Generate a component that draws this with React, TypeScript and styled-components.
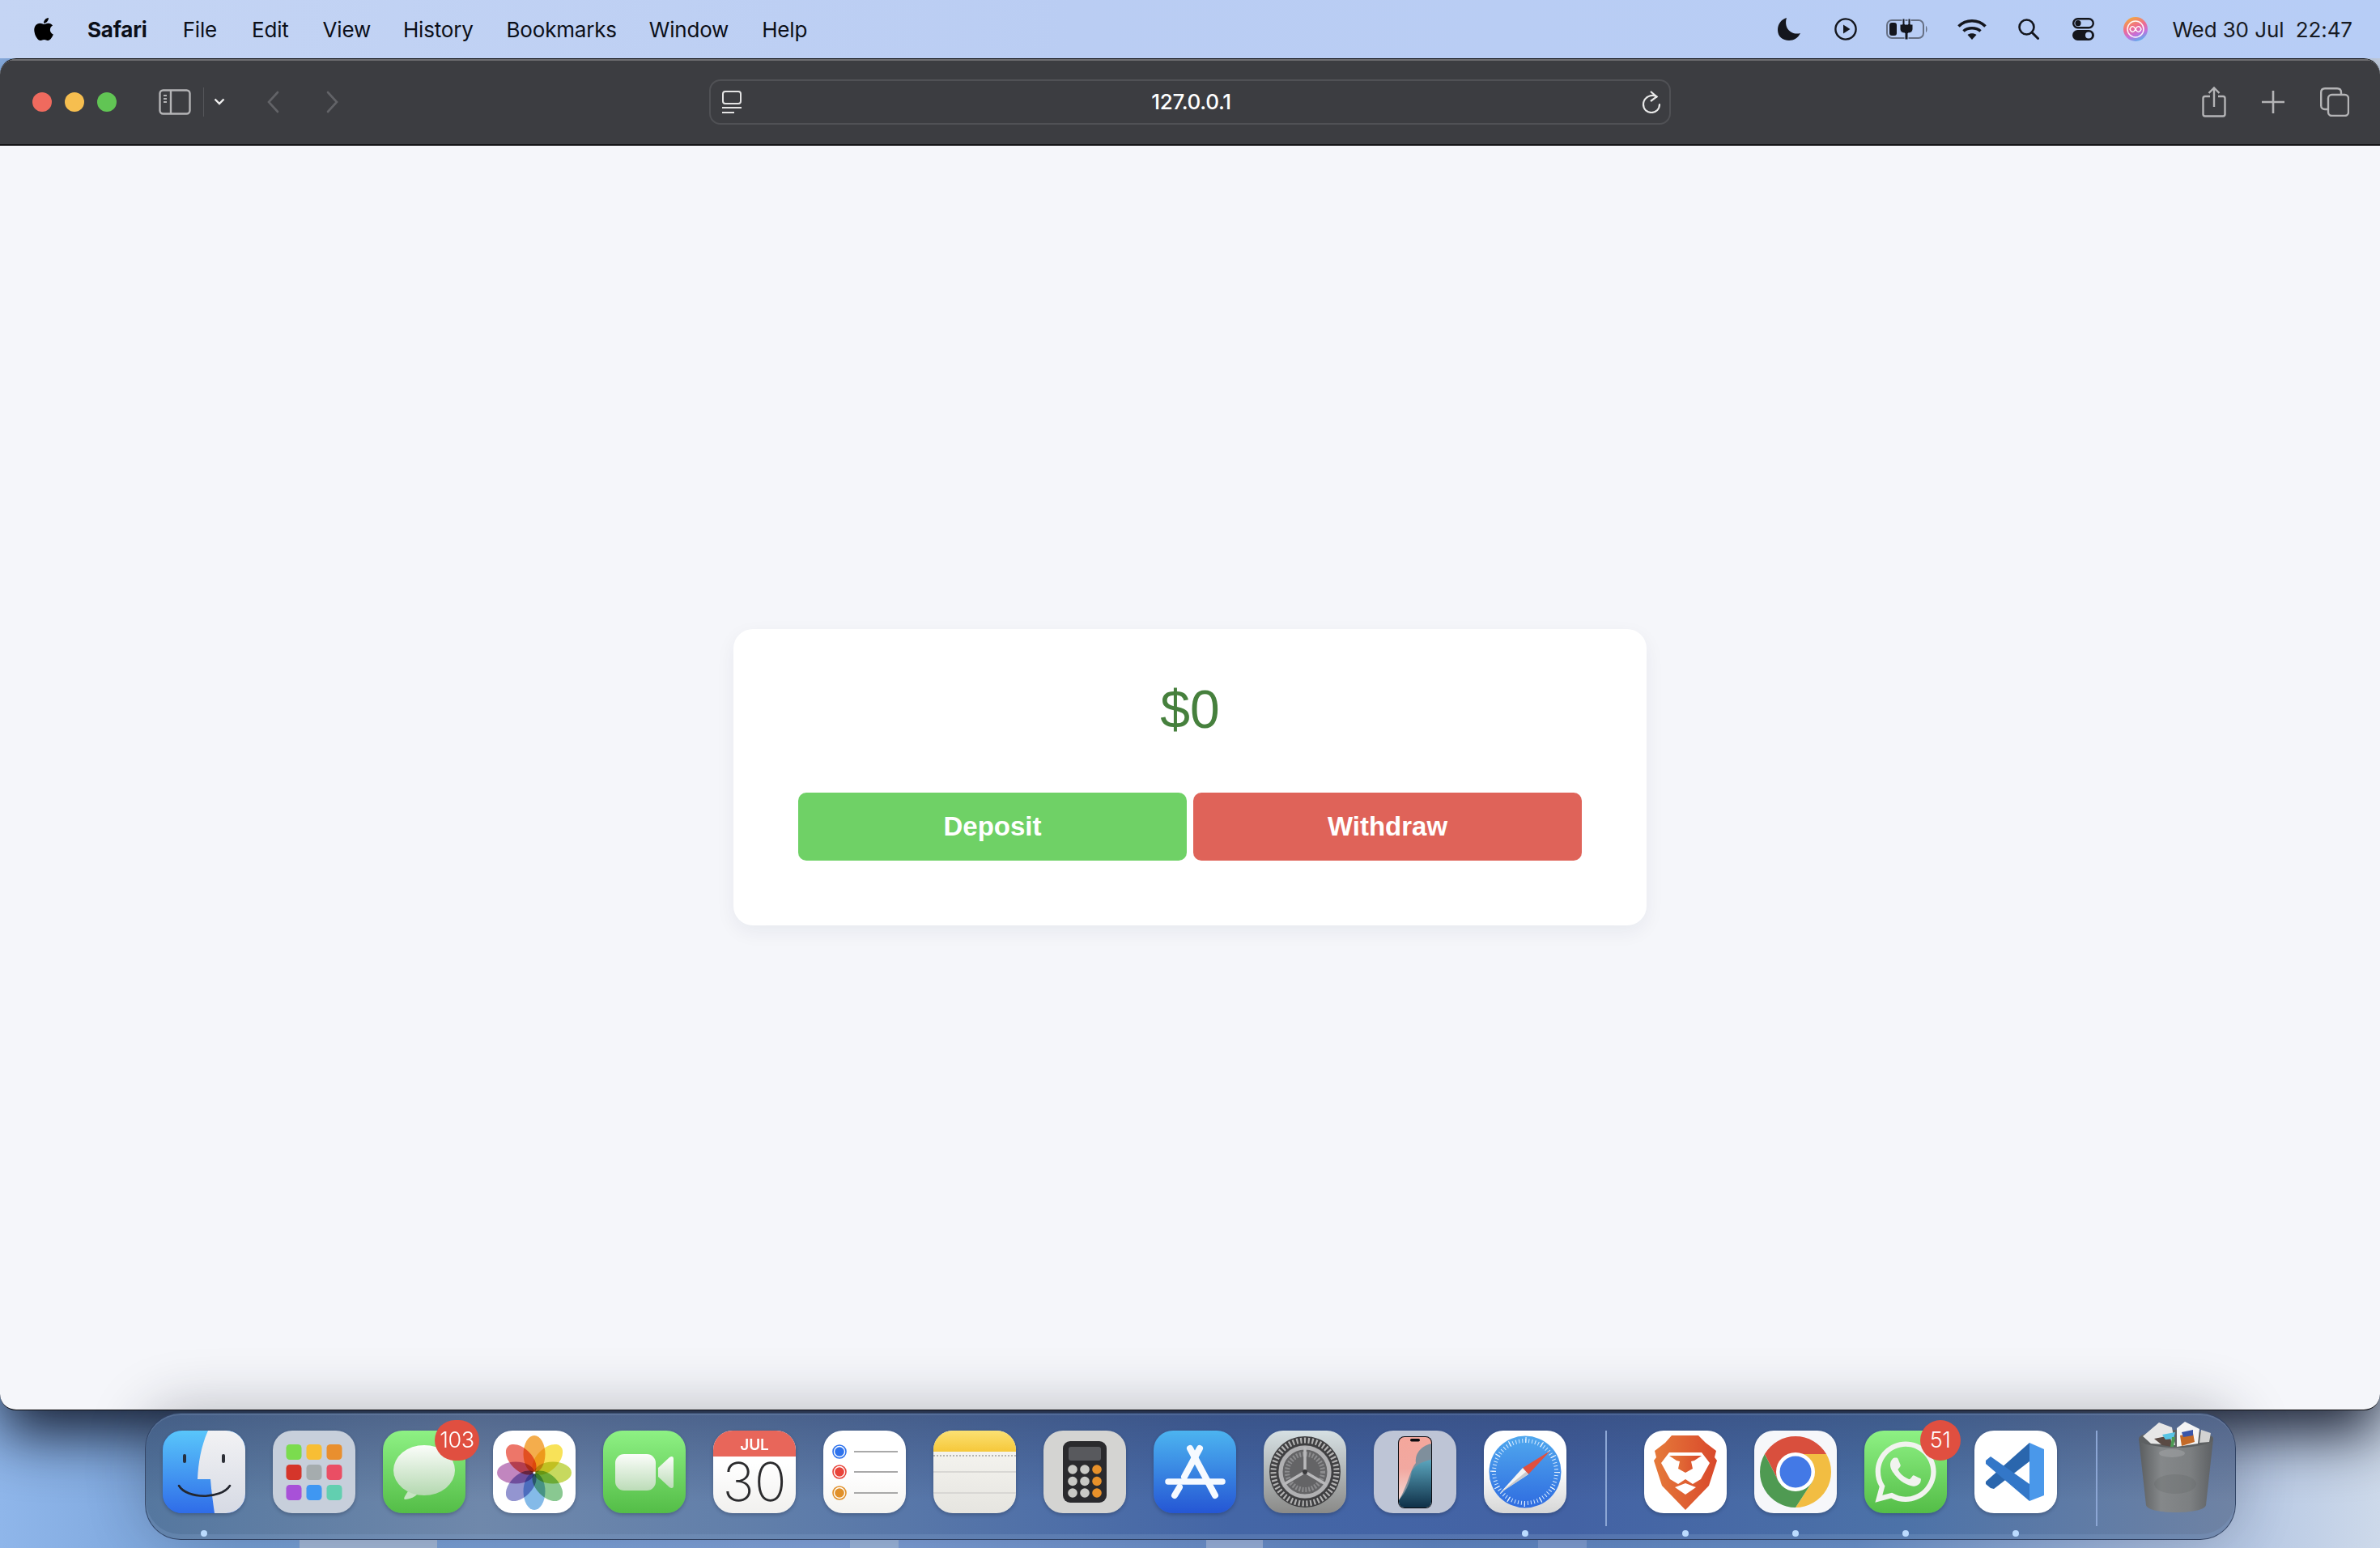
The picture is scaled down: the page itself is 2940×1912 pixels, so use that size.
import React from 'react';
import styled, { createGlobalStyle } from 'styled-components';
import { FaApple, FaWhatsapp } from 'react-icons/fa';

const GlobalStyle = createGlobalStyle`
	html, body {
		margin: 0;
		padding: 0;
		width: 2940px;
		height: 1912px;
		overflow: hidden;
		font-family: Inter, 'Liberation Sans', sans-serif;
	}
`;

const Desktop = styled.div`
	width: 2940px;
	height: 1912px;
	display: flex;
	flex-direction: column;
	background-color: #7ba0d6;
	background-image:
		linear-gradient(#a4b9d8, #a4b9d8),
		linear-gradient(#9cb6dc, #9cb6dc),
		linear-gradient(#98b0da, #98b0da),
		linear-gradient(#7f9dd2, #7f9dd2),
		linear-gradient(90deg, #8fb6ea 0%, #76a0d6 10%, #80a2da 35%, #5f86c4 60%, #6a92cc 78%, #a4bade 90%, #cdd9ea 100%);
	background-size: 170px 10px, 60px 10px, 70px 10px, 60px 10px, 100% 100%;
	background-position: 370px 1902px, 1050px 1902px, 1490px 1902px, 1900px 1902px, 0 0;
	background-repeat: no-repeat;
`;

const MenuBar = styled.header`
	position: relative;
	z-index: 2;
	height: 72px;
	flex: none;
	display: flex;
	align-items: center;
	justify-content: space-between;
	padding: 0 34px 0 38px;
	background: linear-gradient(90deg, #c5d5f4 0%, #bacdf3 45%, #b7cdf6 100%);
	color: #0c0f18;
	font-size: 26px;
`;

const MenuGroup = styled.nav`
	display: flex;
	align-items: center;
`;

const MenuItem = styled.span<{ $bold?: boolean; $left: number }>`
	margin-left: ${({ $left }) => $left}px;
	font-weight: ${({ $bold }) => ($bold ? 700 : 400)};
	letter-spacing: -0.2px;
`;

const StatusSlot = styled.span<{ $left: number }>`
	display: flex;
	align-items: center;
	margin-left: ${({ $left }) => $left}px;
`;

const Clock = styled.time`
	margin-left: 30px;
	white-space: pre;
	letter-spacing: -0.1px;
	color: #171a22;
`;

const BrowserWindow = styled.main`
	width: 2940px;
	height: 1670px;
	flex: none;
	box-sizing: border-box;
	display: flex;
	flex-direction: column;
	border-style: solid;
	border-color: #0b0b0d;
	border-width: 1px 0;
	border-radius: 20px;
	overflow: hidden;
	background: #f5f6fa;
	box-shadow: 0 30px 70px rgba(12, 18, 34, 0.9);
`;

const Toolbar = styled.div`
	height: 107px;
	flex: none;
	box-sizing: border-box;
	display: grid;
	grid-template-columns: 1fr 1188px 1fr;
	align-items: center;
	background: #3c3d41;
	border-bottom: 2px solid #141416;
	box-shadow: inset 0 2px 0 #6d6d70;
`;

const ToolbarLeft = styled.div`
	display: flex;
	align-items: center;
	padding-left: 40px;
`;

const ToolbarRight = styled.div`
	display: flex;
	align-items: center;
	justify-content: flex-end;
	gap: 44px;
	padding-right: 38px;
`;

const TrafficLight = styled.span<{ $color: string }>`
	width: 24px;
	height: 24px;
	border-radius: 50%;
	margin-right: 16px;
	background: ${({ $color }) => $color};
`;

const ToolbarDivider = styled.span`
	width: 1px;
	height: 36px;
	margin: 0 12px 0 15px;
	background: #55565a;
`;

const NavIcon = styled.span<{ $left: number }>`
	display: flex;
	margin-left: ${({ $left }) => $left}px;
`;

const AddressBar = styled.div`
	height: 56px;
	box-sizing: border-box;
	display: flex;
	align-items: center;
	justify-content: space-between;
	padding: 0 9px 0 14px;
	border: 2px solid #505155;
	border-radius: 14px;
	color: #fff;
	font-size: 26px;
	font-weight: 500;
`;

const AddressText = styled.span`
	letter-spacing: -0.3px;
`;

const PageBody = styled.section`
	flex: 1;
	display: flex;
	align-items: center;
	justify-content: center;
	font-family: 'Liberation Sans', Arial, sans-serif;
`;

const Card = styled.div`
	width: 1128px;
	height: 366px;
	box-sizing: border-box;
	margin-bottom: 1px;
	padding: 59px 80px 80px;
	display: flex;
	flex-direction: column;
	background: #fff;
	border-radius: 24px;
	box-shadow: 0 8px 24px rgba(20, 30, 60, 0.06);
`;

const Balance = styled.h2`
	margin: 0 0 63px;
	height: 80px;
	line-height: 80px;
	text-align: center;
	font-size: 66px;
	font-weight: 400;
	color: #46803d;
`;

const ButtonRow = styled.div`
	display: flex;
	gap: 8px;
`;

const ActionButton = styled.button<{ $color: string }>`
	flex: 1;
	height: 84px;
	border: 0;
	border-radius: 10px;
	background: ${({ $color }) => $color};
	color: #fff;
	font-family: inherit;
	font-size: 33px;
	font-weight: 700;
`;

const DockRow = styled.div`
	position: relative;
	z-index: 1;
	display: flex;
	justify-content: center;
	margin-top: 3px;
`;

const Dock = styled.footer`
	width: 2583px;
	height: 157px;
	box-sizing: border-box;
	display: flex;
	gap: 34px;
	padding: 21px 21px 0 21px;
	border: 1px solid rgba(40, 55, 85, 0.75);
	border-radius: 44px;
	background:
		linear-gradient(180deg, rgba(44, 60, 100, 0.42) 0%, rgba(44, 60, 100, 0) 70%),
		linear-gradient(90deg, #55779f 0%, #6f88ab 16%, #607eaa 30%, #4466a6 52%, #4362a4 68%, #4c72a8 84%, #6f83a4 100%);
	box-shadow: 0 -6px 70px rgba(30, 32, 45, 0.28), inset 0 -6px 0 rgba(130, 160, 205, 0.28), inset 0 2px 0 rgba(150, 170, 200, 0.2);
`;

const DockItem = styled.div`
	position: relative;
	width: 102px;
	flex: none;
	display: flex;
	flex-direction: column;
	align-items: center;
`;

const AppTile = styled.div<{ $bg: string }>`
	width: 102px;
	height: 102px;
	border-radius: 24px;
	background: ${({ $bg }) => $bg};
	display: flex;
	align-items: center;
	justify-content: center;
	overflow: hidden;
	box-shadow: 0 2px 4px rgba(15, 25, 50, 0.3);
	svg {
		display: block;
	}
`;

const RunningDot = styled.span<{ $on: boolean }>`
	width: 8px;
	height: 8px;
	margin-top: 21px;
	border-radius: 50%;
	background: ${({ $on }) => ($on ? '#bcdcff' : 'transparent')};
`;

const Badge = styled.span`
	position: absolute;
	top: -13px;
	right: -17px;
	min-width: 50px;
	height: 50px;
	box-sizing: border-box;
	padding: 0 6px;
	border-radius: 25px;
	background: #e04f40;
	color: #fff;
	font-size: 27px;
	font-weight: 300;
	line-height: 50px;
	text-align: center;
	letter-spacing: -0.5px;
`;

const DockDivider = styled.span`
	width: 2px;
	height: 118px;
	margin: 0 12px 0 14px;
	flex: none;
	background: #8ca6d4;
`;

const Petal = styled.ellipse`
	mix-blend-mode: multiply;
`;

const Tile: React.FC<{ children: React.ReactNode }> = ({ children }) => (
	<svg width="102" height="102" viewBox="0 0 102 102">
		{children}
	</svg>
);

const Finder = () => (
	<Tile>
		<defs>
			<linearGradient id="fl" x1="0" y1="0" x2="0" y2="1">
				<stop offset="0" stopColor="#59c6fb" />
				<stop offset="1" stopColor="#2f6ce8" />
			</linearGradient>
			<linearGradient id="fr" x1="0" y1="0" x2="0" y2="1">
				<stop offset="0" stopColor="#f2f2f4" />
				<stop offset="1" stopColor="#d6dae4" />
			</linearGradient>
		</defs>
		<rect width="102" height="102" fill="url(#fl)" />
		<path d="M56 0H102V102H64C62 88 60 74 59 60H43C44 38 48 18 56 0Z" fill="url(#fr)" />
		<rect x="25" y="29" width="4" height="11" rx="2" fill="#26303f" />
		<rect x="73" y="29" width="4" height="11" rx="2" fill="#2c2f36" />
		<path d="M20 68C30 85 72 85 83 68" fill="none" stroke="#23262e" strokeWidth="2.6" strokeLinecap="round" />
	</Tile>
);

const launchColors = ['#7bdc4e', '#f8be34', '#e98f2e', '#d5352a', '#a5acae', '#ea4e64', '#a851d8', '#3f97f2', '#62cfb0'];

const Launchpad = () => (
	<Tile>
		{launchColors.map((color, i) => (
			<rect
				key={color}
				x={16.5 + (i % 3) * 25}
				y={17 + Math.floor(i / 3) * 25}
				width="19"
				height="19"
				rx="4.5"
				fill={color}
			/>
		))}
	</Tile>
);

const Messages = () => (
	<Tile>
		<defs>
			<linearGradient id="mb" x1="0" y1="0" x2="0" y2="1">
				<stop offset="0" stopColor="#fbfdfa" />
				<stop offset="1" stopColor="#b4d8b0" />
			</linearGradient>
		</defs>
		<path d="M31 75C27 81 25 84 27 85C33 85 40 82 44 77Z" fill="#c7e4c3" />
		<ellipse cx="51" cy="49" rx="38" ry="31" fill="url(#mb)" />
	</Tile>
);

const petals = ['#f3a63c', '#f8e04a', '#c2d650', '#7fc488', '#7ab4e6', '#8a8ccc', '#bc7cba', '#ec6a5c'];

const Photos = () => (
	<Tile>
		{petals.map((color, i) => (
			<Petal
				key={color}
				cx="51"
				cy="29"
				rx="13.5"
				ry="23"
				fill={color}
				opacity="0.92"
				transform={`rotate(${i * 45} 51 52)`}
			/>
		))}
		<circle cx="51" cy="52" r="1.6" fill="#fff" />
	</Tile>
);

const FaceTime = () => (
	<Tile>
		<defs>
			<linearGradient id="ft" x1="0" y1="0" x2="0" y2="1">
				<stop offset="0" stopColor="#fbfdfa" />
				<stop offset="1" stopColor="#bcdcb8" />
			</linearGradient>
		</defs>
		<rect x="15" y="29" width="50" height="45" rx="11" fill="url(#ft)" />
		<path d="M68 46L82 33C85 31 87 32 87 35V68C87 71 85 72 82 70L68 57Z" fill="url(#ft)" />
	</Tile>
);

const Calendar = () => (
	<Tile>
		<rect width="102" height="32" fill="#e8665a" />
		<text x="51" y="24" textAnchor="middle" fontSize="19" fontWeight="600" fill="#fff" fontFamily="Inter, sans-serif">
			JUL
		</text>
		<text x="51" y="87" textAnchor="middle" fontSize="66" fontWeight="200" fill="#2b2b2d" fontFamily="Inter, sans-serif">
			30
		</text>
	</Tile>
);

const reminderRows = [
	{ y: 26, color: '#2f73ec' },
	{ y: 51, color: '#e8443a' },
	{ y: 77, color: '#e0902a' },
];

const Reminders = () => (
	<Tile>
		{reminderRows.map(({ y, color }) => (
			<g key={y}>
				<circle cx="20" cy={y} r="8" fill="#fff" stroke={color} strokeWidth="1.6" />
				<circle cx="20" cy={y} r="5.8" fill={color} />
				<rect x="38" y={y - 1} width="54" height="2" fill="#a9a9a9" />
			</g>
		))}
	</Tile>
);

const Notes = () => (
	<Tile>
		<defs>
			<linearGradient id="ny" x1="0" y1="0" x2="0" y2="1">
				<stop offset="0" stopColor="#fbe173" />
				<stop offset="1" stopColor="#f6c83a" />
			</linearGradient>
		</defs>
		<rect width="102" height="26" fill="url(#ny)" />
		<line x1="0" y1="31" x2="102" y2="31" stroke="#b5b5b2" strokeWidth="2" strokeDasharray="2 2" />
		<rect y="50" width="102" height="2" fill="#d8d7d4" />
		<rect y="76" width="102" height="2" fill="#d8d7d4" />
	</Tile>
);

const calcKeys = [0, 1, 2].flatMap((row) => [0, 1, 2].map((col) => ({ row, col })));

const Calculator = () => (
	<Tile>
		<rect x="24" y="13" width="54" height="76" rx="9" fill="#2a2a2d" />
		<rect x="31" y="20" width="40" height="17" rx="3" fill="#58595d" />
		{calcKeys.map(({ row, col }) => (
			<circle
				key={`${row}-${col}`}
				cx={36 + col * 15}
				cy={48 + row * 14.5}
				r="5.8"
				fill={col === 2 ? '#e8912a' : '#c9c9c5'}
			/>
		))}
	</Tile>
);

const AppStore = () => (
	<Tile>
		<g fill="none" stroke="#f6faff" strokeLinecap="round">
			<path d="M57 22L38 57" strokeWidth="8" />
			<path d="M32 70L26 80" strokeWidth="8" />
			<path d="M45 22L76 80" strokeWidth="8" />
			<path d="M18 63H85" strokeWidth="7.5" />
		</g>
	</Tile>
);

const Settings = () => (
	<Tile>
		<circle cx="51" cy="51" r="44" fill="#3f3f41" />
		<circle cx="51" cy="51" r="39" fill="none" stroke="#b2b2b2" strokeWidth="7" strokeDasharray="2.2 2.6" />
		<circle cx="51" cy="51" r="33" fill="#646466" />
		<circle cx="51" cy="51" r="30" fill="none" stroke="#b0b0b2" strokeWidth="5" />
		<circle cx="51" cy="51" r="22" fill="none" stroke="#8c8c8e" strokeWidth="6" strokeDasharray="2 2" />
		<g stroke="#b8b8ba" strokeWidth="3.5">
			<line x1="51" y1="51" x2="51" y2="20" />
			<line x1="51" y1="51" x2="24" y2="67" />
			<line x1="51" y1="51" x2="78" y2="67" />
		</g>
		<circle cx="51" cy="51" r="3" fill="#3b3b3d" />
	</Tile>
);

const IPhone = () => (
	<Tile>
		<defs>
			<linearGradient id="ip" x1="0" y1="0" x2="0" y2="1">
				<stop offset="0" stopColor="#f4a79c" />
				<stop offset="0.45" stopColor="#f2a8a0" />
				<stop offset="1" stopColor="#f6e6e2" />
			</linearGradient>
			<linearGradient id="iq" x1="0" y1="0" x2="0" y2="1">
				<stop offset="0" stopColor="#5ba5bd" />
				<stop offset="1" stopColor="#0f3048" />
			</linearGradient>
			<clipPath id="ic">
				<rect x="31" y="8" width="40" height="87" rx="7" />
			</clipPath>
		</defs>
		<rect x="30" y="7" width="42" height="89" rx="8" fill="#0b0b10" />
		<g clipPath="url(#ic)">
			<rect x="31" y="8" width="40" height="87" fill="url(#ip)" />
			<path d="M71 16C56 20 51 30 52 40C45 48 42 68 31 86V95H71Z" fill="#7f8f9c" />
			<path d="M71 36C60 38 52 42 47 50C45 66 38 78 31 86V95H71Z" fill="url(#iq)" />
		</g>
		<rect x="45" y="10" width="12" height="3.5" rx="1.7" fill="#0b0b10" />
	</Tile>
);

const Safari = () => (
	<Tile>
		<defs>
			<linearGradient id="sg" x1="0" y1="0" x2="0" y2="1">
				<stop offset="0" stopColor="#50a8ee" />
				<stop offset="1" stopColor="#2f6ce0" />
			</linearGradient>
		</defs>
		<circle cx="51" cy="51" r="44.5" fill="url(#sg)" />
		<circle cx="51" cy="51" r="38.5" fill="none" stroke="#d8ebff" strokeWidth="5" strokeDasharray="1 3.03" />
		<circle cx="51" cy="51" r="39.5" fill="none" stroke="#eef6ff" strokeWidth="7" strokeDasharray="1.1 19.6" />
		<polygon points="82,25 48,46 55,54" fill="#e0503f" />
		<polygon points="20,77 48,46 55,54" fill="#f4f4f4" />
		<polygon points="20,77 55,54 52,51" fill="#c9c9cc" />
	</Tile>
);

const Brave = () => (
	<Tile>
		<defs>
			<linearGradient id="bg" x1="0" y1="0" x2="1" y2="0">
				<stop offset="0" stopColor="#e57a3a" />
				<stop offset="1" stopColor="#d9482b" />
			</linearGradient>
		</defs>
		<polygon
			points="34,6 67,6 76,15 89,25 87,33 90,37 80,68 51,98 22,68 12,37 15,33 13,25 26,15"
			fill="url(#bg)"
		/>
		<polygon points="21,40 31,27 71,27 81,40 70,60 60,66 51,60 42,66 32,60" fill="#fff" />
		<polygon points="31,31 71,31 62,37 58,38 60,47 51,52 42,47 44,38 40,37" fill="url(#bg)" />
		<polygon points="38,70 51,65 64,70 51,79" fill="#fff" />
	</Tile>
);

const Chrome = () => (
	<Tile>
		<path d="M12.9 29A44 44 0 0 1 89.1 29L51 29L51 51L30.2 63Z" fill="#d94f3d" />
		<path d="M89.1 29A44 44 0 0 1 51 95L71.8 63L51 51L51 29Z" fill="#f2bd42" />
		<path d="M51 95A44 44 0 0 1 12.9 29L30.2 63L51 51L71.8 63Z" fill="#4f9a52" />
		<circle cx="51" cy="51" r="24" fill="#fff" />
		<circle cx="51" cy="51" r="19.5" fill="#4379e6" />
	</Tile>
);

const VSCode = () => (
	<Tile>
		<polygon points="68,15 68,38 24,72 20,71 14,66 14,63" fill="#2a66ad" />
		<polygon points="20,32 14,37 14,41 68,87 68,66" fill="#3377c8" />
		<polygon points="68,15 86,23 86,80 68,87" fill="#4a98ea" />
	</Tile>
);

const TrashSvg = styled.svg`
	display: block;
	overflow: visible;
`;

const Trash = () => (
	<TrashSvg width="102" height="102" viewBox="0 0 102 102">
		<defs>
			<linearGradient id="tc" x1="0" y1="0" x2="1" y2="0">
				<stop offset="0" stopColor="#5a5d5f" />
				<stop offset="0.3" stopColor="#85888a" />
				<stop offset="0.7" stopColor="#7c7f81" />
				<stop offset="1" stopColor="#5d6063" />
			</linearGradient>
		</defs>
		<path d="M5 10L14 92C16 104 86 104 88 92L97 10Z" fill="url(#tc)" />
		<ellipse cx="51" cy="10" rx="46" ry="11" fill="#5d6062" />
		<g>
			<polygon points="10,7 30,-10 46,-4 50,18 20,16" fill="#e6e6e6" />
			<polygon points="52,-3 62,-11 80,-2 78,16 52,20" fill="#f4f4f4" />
			<polygon points="82,-1 94,3 92,14 80,15" fill="#d2d2d2" />
			<polygon points="24,10 44,6 46,20 34,18" fill="#5a4a44" />
			<polygon points="34,5 50,2 48,10 38,11" fill="#58c4e4" />
			<polygon points="56,6 72,3 74,14 58,19" fill="#c46a28" />
			<polygon points="58,2 72,-1 72,6 60,8" fill="#3a55a8" />
			<polygon points="46,8 50,8 48,20 44,20" fill="#4c9a54" />
		</g>
		<ellipse cx="46" cy="28" rx="16" ry="5" fill="#a4a6a8" opacity="0.5" />
		<ellipse cx="50" cy="66" rx="26" ry="12" fill="#5f6265" opacity="0.25" />
	</TrashSvg>
);

const WhatsApp = () => <FaWhatsapp size={86} color="#f1f3ef" />;

type DockApp = {
	id: string;
	bg: string;
	icon: React.ReactNode;
	running?: boolean;
	badge?: string;
};

const green = 'linear-gradient(180deg, #8ef184 0%, #54bd47 100%)';

const firstApps: DockApp[] = [
	{ id: 'finder', bg: '#2f6ce8', icon: <Finder />, running: true },
	{ id: 'launchpad', bg: '#c7cfdb', icon: <Launchpad /> },
	{ id: 'messages', bg: green, icon: <Messages />, badge: '103' },
	{ id: 'photos', bg: '#fff', icon: <Photos /> },
	{ id: 'facetime', bg: green, icon: <FaceTime /> },
	{ id: 'calendar', bg: 'linear-gradient(180deg, #fff 40%, #f1f0ee 100%)', icon: <Calendar /> },
	{ id: 'reminders', bg: 'linear-gradient(180deg, #fff 50%, #f4f3f0 100%)', icon: <Reminders /> },
	{ id: 'notes', bg: 'linear-gradient(180deg, #f8f7f3 0%, #e6e5e0 100%)', icon: <Notes /> },
	{ id: 'calculator', bg: '#d4d4d2', icon: <Calculator /> },
	{ id: 'appstore', bg: 'linear-gradient(180deg, #4cb4f0 0%, #2556d4 100%)', icon: <AppStore /> },
	{ id: 'settings', bg: 'linear-gradient(180deg, #d6e0e3 0%, #8a8a88 100%)', icon: <Settings /> },
	{ id: 'iphone', bg: '#bec5d6', icon: <IPhone /> },
	{ id: 'safari', bg: 'linear-gradient(180deg, #fff 45%, #d6d6d6 100%)', icon: <Safari />, running: true },
];

const secondApps: DockApp[] = [
	{ id: 'brave', bg: '#fff', icon: <Brave />, running: true },
	{ id: 'chrome', bg: '#f6f7fa', icon: <Chrome />, running: true },
	{ id: 'whatsapp', bg: green, icon: <WhatsApp />, running: true, badge: '51' },
	{ id: 'vscode', bg: '#fff', icon: <VSCode />, running: true },
];

const renderApp = (app: DockApp) => (
	<DockItem key={app.id}>
		<AppTile $bg={app.bg}>{app.icon}</AppTile>
		<RunningDot $on={!!app.running} />
		{app.badge && <Badge>{app.badge}</Badge>}
	</DockItem>
);

const menuItems = [
	{ label: 'File', left: 44 },
	{ label: 'Edit', left: 43 },
	{ label: 'View', left: 42 },
	{ label: 'History', left: 40 },
	{ label: 'Bookmarks', left: 41 },
	{ label: 'Window', left: 40 },
	{ label: 'Help', left: 41 },
];

const ink = '#14161d';

const App = () => {
	return (
		<Desktop>
			<GlobalStyle />
			<MenuBar>
				<MenuGroup>
					<FaApple size={32} color="#000" />
					<MenuItem $bold $left={38}>
						Safari
					</MenuItem>
					{menuItems.map((item) => (
						<MenuItem key={item.label} $left={item.left}>
							{item.label}
						</MenuItem>
					))}
				</MenuGroup>
				<MenuGroup>
					<StatusSlot $left={0}>
						<svg width="28" height="28" viewBox="0 0 28 28">
							<path d="M11 0C4 2 0 8 0 15C0 23 6 28 14 28C20 28 25 25 28 19C17 22 7 13 11 0Z" fill={ink} />
						</svg>
					</StatusSlot>
					<StatusSlot $left={42}>
						<svg width="28" height="28" viewBox="0 0 28 28">
							<circle cx="14" cy="14" r="12.6" fill="none" stroke={ink} strokeWidth="2.4" />
							<path d="M11 8.5L19.5 14L11 19.5Z" fill={ink} />
						</svg>
					</StatusSlot>
					<StatusSlot $left={36}>
						<svg width="52" height="26" viewBox="0 0 52 26">
							<rect x="1" y="2" width="45" height="22" rx="6" fill="none" stroke="#667085" strokeWidth="2" />
							<path d="M49 9C51 10 51 16 49 17Z" fill="#667085" />
							<rect x="4" y="5" width="9" height="16" rx="3" fill={ink} />
							<path d="M20 0H23V7H27V0H30V7H33V13C33 16 30 18 27 18V26H23V18C20 18 17 16 17 13V7H20Z" fill={ink} stroke="#b7cdf6" strokeWidth="1" />
						</svg>
					</StatusSlot>
					<StatusSlot $left={36}>
						<svg width="36" height="26" viewBox="0 0 36 26">
							<g fill="none" stroke={ink} strokeWidth="3.6">
								<path d="M1.5 9.5C10.5 0.5 25.5 0.5 34.5 9.5" />
								<path d="M7.5 15.5C13 10.5 23 10.5 28.5 15.5" />
							</g>
							<path d="M12.5 20C15.5 17.5 20.5 17.5 23.5 20L18 26Z" fill={ink} />
						</svg>
					</StatusSlot>
					<StatusSlot $left={39}>
						<svg width="26" height="26" viewBox="0 0 26 26">
							<circle cx="10.5" cy="10.5" r="9" fill="none" stroke={ink} strokeWidth="2.6" />
							<path d="M17 17L24.5 24.5" stroke={ink} strokeWidth="3" strokeLinecap="round" />
						</svg>
					</StatusSlot>
					<StatusSlot $left={41}>
						<svg width="27" height="28" viewBox="0 0 27 28">
							<rect x="1.2" y="1.2" width="24.6" height="11" rx="5.5" fill="none" stroke={ink} strokeWidth="2.4" />
							<circle cx="7" cy="6.7" r="3.6" fill={ink} />
							<rect y="15" width="27" height="13" rx="6.5" fill={ink} />
							<circle cx="20" cy="21.5" r="4" fill="#b7cdf6" />
						</svg>
					</StatusSlot>
					<StatusSlot $left={36}>
						<svg width="30" height="30" viewBox="0 0 30 30">
							<defs>
								<linearGradient id="siri" x1="0.3" y1="0" x2="0.7" y2="1">
									<stop offset="0" stopColor="#f4a93c" />
									<stop offset="0.4" stopColor="#ef6c8e" />
									<stop offset="0.7" stopColor="#c46fdc" />
									<stop offset="1" stopColor="#4fb6ee" />
								</linearGradient>
							</defs>
							<circle cx="15" cy="15" r="15" fill="url(#siri)" />
							<circle cx="15" cy="15" r="10" fill="none" stroke="#fff" strokeWidth="1.5" opacity="0.95" />
							<path d="M8 15C10 10 13 11 15 15C17 19 20 20 22 15C20 10 17 11 15 15C13 19 10 20 8 15Z" fill="none" stroke="#fff" strokeWidth="1.4" />
						</svg>
					</StatusSlot>
					<Clock>Wed 30 Jul  22:47</Clock>
				</MenuGroup>
			</MenuBar>

			<BrowserWindow>
				<Toolbar>
					<ToolbarLeft>
						<TrafficLight $color="#ef6a5e" />
						<TrafficLight $color="#f6be4f" />
						<TrafficLight $color="#61c554" />
						<NavIcon $left={36}>
							<svg width="40" height="32" viewBox="0 0 40 32" fill="none">
								<rect x="1.5" y="1.5" width="37" height="29" rx="4" stroke="#b4b4b6" strokeWidth="2.4" />
								<line x1="15" y1="2" x2="15" y2="30" stroke="#b4b4b6" strokeWidth="2.4" />
								<path d="M6 8H10M6 12H10M6 16H10" stroke="#b4b4b6" strokeWidth="2" />
							</svg>
						</NavIcon>
						<ToolbarDivider />
						<svg width="14" height="9" viewBox="0 0 14 9" fill="none">
							<path d="M1.5 1.5L7 7L12.5 1.5" stroke="#f0f0f0" strokeWidth="2.4" />
						</svg>
						<NavIcon $left={51}>
							<svg width="16" height="28" viewBox="0 0 16 28" fill="none">
								<path d="M14 2L3 14L14 26" stroke="#626367" strokeWidth="2.6" strokeLinecap="round" />
							</svg>
						</NavIcon>
						<NavIcon $left={58}>
							<svg width="16" height="28" viewBox="0 0 16 28" fill="none">
								<path d="M2 2L13 14L2 26" stroke="#626367" strokeWidth="2.6" strokeLinecap="round" />
							</svg>
						</NavIcon>
					</ToolbarLeft>
					<AddressBar>
						<svg width="24" height="28" viewBox="0 0 24 28" fill="none">
							<rect x="1" y="1" width="22" height="15" rx="3" stroke="#e4e4e4" strokeWidth="2" />
							<path d="M0 21H24" stroke="#e4e4e4" strokeWidth="2" />
							<path d="M0 27H15" stroke="#e4e4e4" strokeWidth="2" />
						</svg>
						<AddressText>127.0.0.1</AddressText>
						<svg width="26" height="28" viewBox="0 0 26 28" fill="none">
							<path d="M19.5 7.5C13 3.5 3 8 3 17C3 23 7.5 27 13 27C18.5 27 23 23 23 17" stroke="#e8e8e8" strokeWidth="2.2" strokeLinecap="round" />
							<path d="M12 1L19.5 7.5L12 13" stroke="#e8e8e8" strokeWidth="2.2" />
						</svg>
					</AddressBar>
					<ToolbarRight>
						<svg width="30" height="38" viewBox="0 0 30 38" fill="none">
							<path d="M10 12H4C2.5 12 1.5 13 1.5 14.5V34C1.5 35.5 2.5 36.5 4 36.5H26C27.5 36.5 28.5 35.5 28.5 34V14.5C28.5 13 27.5 12 26 12H20" stroke="#b4b4b6" strokeWidth="2.4" />
							<path d="M15 25V2M8.5 8L15 1.5L21.5 8" stroke="#b4b4b6" strokeWidth="2.4" />
						</svg>
						<svg width="28" height="28" viewBox="0 0 28 28" fill="none">
							<path d="M14 0V28M0 14H28" stroke="#b4b4b6" strokeWidth="2.6" />
						</svg>
						<svg width="36" height="36" viewBox="0 0 36 36" fill="none">
							<rect x="10" y="9" width="25" height="26" rx="4.5" stroke="#b4b4b6" strokeWidth="2.4" />
							<path d="M10 27H6C3 27 1.2 25 1.2 22.5V6C1.2 3 3 1.2 6 1.2H21C24 1.2 26 3 26 6V9" stroke="#b4b4b6" strokeWidth="2.4" />
						</svg>
					</ToolbarRight>
				</Toolbar>
				<PageBody>
					<Card>
						<Balance>$0</Balance>
						<ButtonRow>
							<ActionButton $color="#6fd166">Deposit</ActionButton>
							<ActionButton $color="#df6359">Withdraw</ActionButton>
						</ButtonRow>
					</Card>
				</PageBody>
			</BrowserWindow>

			<DockRow>
				<Dock>
					{firstApps.map(renderApp)}
					<DockDivider />
					{secondApps.map(renderApp)}
					<DockDivider />
					<DockItem>
						<Trash />
					</DockItem>
				</Dock>
			</DockRow>
		</Desktop>
	);
};

export default App;
